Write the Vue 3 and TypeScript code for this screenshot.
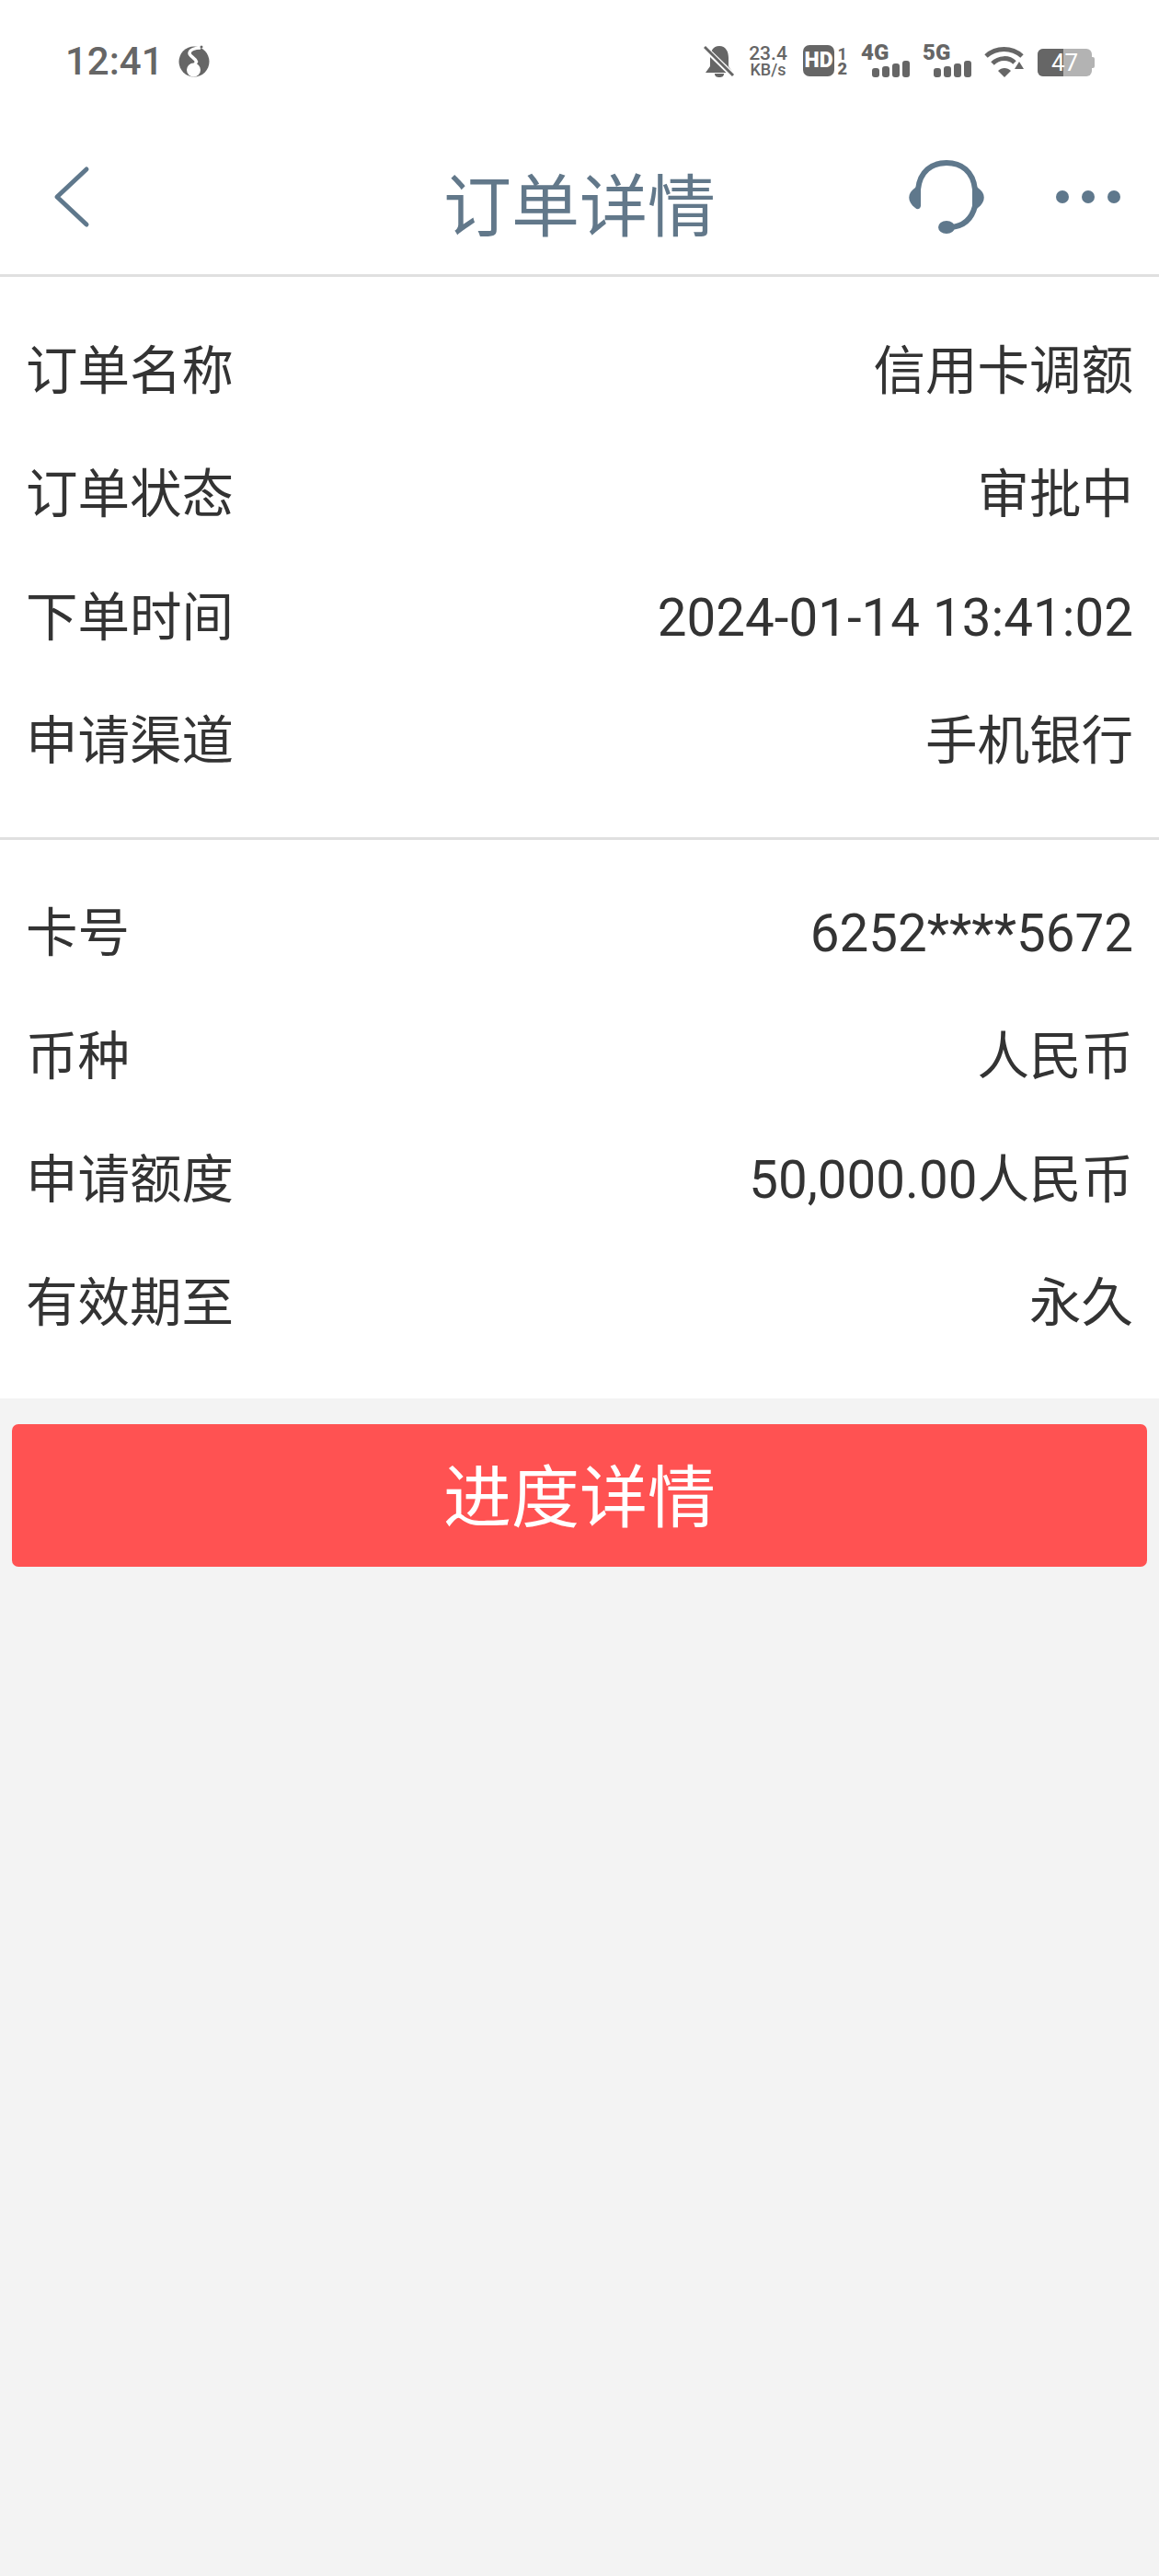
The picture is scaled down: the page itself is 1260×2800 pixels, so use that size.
<script setup lang="ts">
interface Row {
  label: string
  value: string
}

const orderRows: Row[] = [
  { label: '订单名称', value: '信用卡调额' },
  { label: '订单状态', value: '审批中' },
  { label: '下单时间', value: '2024-01-14 13:41:02' },
  { label: '申请渠道', value: '手机银行' }
]

const cardRows: Row[] = [
  { label: '卡号', value: '6252****5672' },
  { label: '币种', value: '人民币' },
  { label: '申请额度', value: '50,000.00人民币' },
  { label: '有效期至', value: '永久' }
]

const signalBars = [0, 1, 2, 3]
</script>

<template>
  <div class="page">
    <div class="status-bar">
      <div class="status-left">
        <span class="clock">12:41</span>
        <svg class="note-icon" width="34" height="35" viewBox="0 0 34 35">
          <circle cx="17" cy="18" r="16.5" fill="#666" />
          <path d="M24 3 C18 3 12 5 12 9 C12 12 18 14 19.500 18 L16 25" fill="none" stroke="#fff" stroke-width="3.500" />
          <circle cx="16.500" cy="27" r="7.500" fill="#fff" />
          <circle cx="25" cy="2" r="1.500" fill="#666" />
        </svg>
      </div>
      <div class="status-right">
        <svg width="34" height="36" viewBox="0 0 34 36">
          <path d="M17 1 C24 1 27 7 27 14 L27 23 L32 30 L2 30 L7 23 L7 14 C7 7 10 1 17 1 Z" fill="#666" />
          <path d="M12 31 L22 31 C22 34 20 35 17 35 C14 35 12 34 12 31 Z" fill="#666" />
          <path d="M1 3 L32 33" stroke="#fff" stroke-width="6" />
          <path d="M1 2 L32 33" stroke="#666" stroke-width="3" />
        </svg>
        <div class="speed">
          <span>23.4</span>
          <span class="speed-unit">KB/s</span>
        </div>
        <div class="hd">
          <span class="hd-box">HD</span>
          <span class="hd-nums"><i>1</i><i class="hd-two">2</i></span>
        </div>
        <div class="net">
          <span class="net-label">4G</span>
          <span class="bars">
            <i v-for="b in signalBars" :key="b" :class="'bar-' + b"></i>
          </span>
        </div>
        <div class="net">
          <span class="net-label">5G</span>
          <span class="bars">
            <i v-for="b in signalBars" :key="b" :class="'bar-' + b"></i>
          </span>
        </div>
        <svg class="wifi" width="44" height="33" viewBox="0 0 44 33">
          <path d="M2 10 C13 0 30 0 41 10" fill="none" stroke="#666" stroke-width="5" />
          <path d="M9 18 C16 11 27 11 33 17" fill="none" stroke="#666" stroke-width="5" />
          <path d="M15 26 L22 33 L29 26 C25 22 19 22 15 26 Z" fill="#666" />
          <path d="M38 16 L43 24 L33 24 Z" fill="#666" />
        </svg>
        <div class="battery">
          <span class="battery-body">
            <span class="battery-fill"></span>
            <span class="battery-text">47</span>
          </span>
          <span class="battery-cap"></span>
        </div>
      </div>
    </div>

    <header class="nav">
      <svg class="back" width="40" height="68" viewBox="0 0 40 68">
        <path d="M36 4 L4 34 L36 64" fill="none" stroke="#5f788c" stroke-width="5" stroke-linecap="round" stroke-linejoin="round" />
      </svg>
      <h1 class="title">订单详情</h1>
      <div class="nav-actions">
        <svg width="84" height="82" viewBox="0 0 84 82">
          <path d="M11 32 C13 12 26 3 42 3 C58 3 71 12 73 32" fill="none" stroke="#5f788c" stroke-width="6" />
          <path d="M14 28 L14 50 C13 54 10 54 8 52 C-1 45 -1 36 8 30 C10 28 12 27 14 28 Z" fill="#5f788c" />
          <path d="M70 28 L70 50 C71 54 74 54 76 52 C85 45 85 36 76 30 C74 28 72 27 70 28 Z" fill="#5f788c" />
          <path d="M73 50 C70 62 62 72 46 73" fill="none" stroke="#5f788c" stroke-width="6" />
          <ellipse cx="42" cy="73" rx="9" ry="7" fill="#5f788c" />
        </svg>
        <span class="dots"><i></i><i></i><i></i></span>
      </div>
    </header>

    <section class="group first">
      <div v-for="row in orderRows" :key="row.label" class="row">
        <span>{{ row.label }}</span>
        <span>{{ row.value }}</span>
      </div>
    </section>
    <section class="group second">
      <div v-for="row in cardRows" :key="row.label" class="row">
        <span>{{ row.label }}</span>
        <span>{{ row.value }}</span>
      </div>
    </section>

    <div class="action">
      <button class="progress-btn" type="button">进度详情</button>
    </div>
  </div>
</template>

<style>
html, body {
  margin: 0;
  background: #f3f3f3;
}
</style>

<style scoped>
.page {
  width: 1260px;
  height: 2800px;
  background: #f3f3f3;
  font-family: Roboto, "Noto Sans CJK SC", sans-serif;
  overflow: hidden;
}
.status-bar {
  height: 150px;
  box-sizing: border-box;
  padding: 49px 70px 0 71px;
  background: #fff;
  display: flex;
  justify-content: space-between;
  align-items: flex-start;
  color: #666;
}
.status-left {
  display: flex;
  align-items: center;
  gap: 16px;
  height: 35px;
}
.clock {
  font-size: 42px;
  font-weight: 500;
  line-height: 35px;
}
.status-right {
  display: flex;
  align-items: flex-start;
  gap: 14px;
  height: 36px;
}
.speed {
  display: flex;
  flex-direction: column;
  align-items: center;
  font-size: 21px;
  line-height: 18px;
  font-weight: 500;
  width: 44px;
  margin-right: 2px;
}
.speed-unit {
  font-size: 18px;
}
.hd {
  display: flex;
  gap: 3px;
}
.hd-box {
  width: 34px;
  height: 34px;
  background: #666;
  color: #fff;
  border-radius: 7px;
  font-size: 23px;
  font-weight: 900;
  line-height: 34px;
  text-align: center;
}
.hd-nums {
  display: flex;
  flex-direction: column;
  justify-content: space-between;
  align-items: center;
  height: 34px;
  font-size: 13px;
  line-height: 13px;
  font-weight: 700;
  width: 12px;
  padding: 3px 0 2px;
  box-sizing: border-box;
}
.hd-nums i {
  font-style: normal;
  transform: scale(1.4);
}
.hd-two {
  font-weight: 900;
}
.net {
  width: 53px;
  height: 36px;
  display: flex;
  flex-direction: column;
}
.net-label {
  font-size: 24px;
  font-weight: 900;
  line-height: 17px;
}
.bars {
  display: flex;
  align-items: flex-end;
  justify-content: flex-end;
  gap: 3px;
  height: 18px;
}
.bars i {
  width: 8px;
  border-radius: 3px;
  background: #666;
}
.bar-0 { height: 10px; }
.bar-1 { height: 12px; }
.bar-2 { height: 15px; }
.bar-3 { height: 18px; }
.wifi {
  margin-top: 2px;
}
.battery {
  display: flex;
  align-items: center;
  margin-top: 4px;
}
.battery-body {
  position: relative;
  width: 59px;
  height: 30px;
  border-radius: 6px;
  background: #b3b3b3;
  overflow: hidden;
  display: block;
}
.battery-fill {
  position: absolute;
  left: 0;
  top: 0;
  bottom: 0;
  width: 28px;
  background: #666;
}
.battery-text {
  position: absolute;
  inset: 0;
  text-align: center;
  color: #fff;
  font-size: 26px;
  line-height: 30px;
}
.battery-cap {
  width: 3px;
  height: 12px;
  background: #b3b3b3;
  border-radius: 0 2px 2px 0;
}
.nav {
  height: 151px;
  box-sizing: border-box;
  background: #fff;
  border-bottom: 3px solid #e0e0e0;
  display: grid;
  grid-template-columns: 1fr auto 1fr;
  align-items: center;
  padding: 0 42px;
}
.back {
  margin: -20px 0 0 16px;
}
.title {
  margin: 4px 0 0;
  font-size: 74px;
  font-weight: 400;
  color: #62788a;
  line-height: 90px;
}
.nav-actions {
  display: flex;
  justify-content: flex-end;
  align-items: center;
  gap: 77px;
  margin-top: -18px;
}
.dots {
  display: flex;
  gap: 14px;
  margin-top: -2px;
}
.dots i {
  width: 14px;
  height: 14px;
  border-radius: 50%;
  background: #5f788c;
}
.group {
  background: #fff;
  padding: 0 28px 0 28px;
}
.group.first {
  padding-top: 36px;
  padding-bottom: 37px;
  border-bottom: 3px solid #e0e0e0;
}
.group.second {
  padding-top: 35px;
  padding-bottom: 36px;
}
.row {
  height: 134px;
  display: flex;
  justify-content: space-between;
  align-items: center;
  font-size: 56.5px;
  line-height: 70px;
  color: #333;
}
.action {
  padding: 28px 13px 0;
}
.progress-btn {
  display: block;
  width: 100%;
  height: 155px;
  border: 0;
  border-radius: 7px;
  background: #ff5252;
  color: #fff;
  font-family: inherit;
  font-size: 74px;
  line-height: 90px;
  padding: 7px 0 0;
}
</style>
